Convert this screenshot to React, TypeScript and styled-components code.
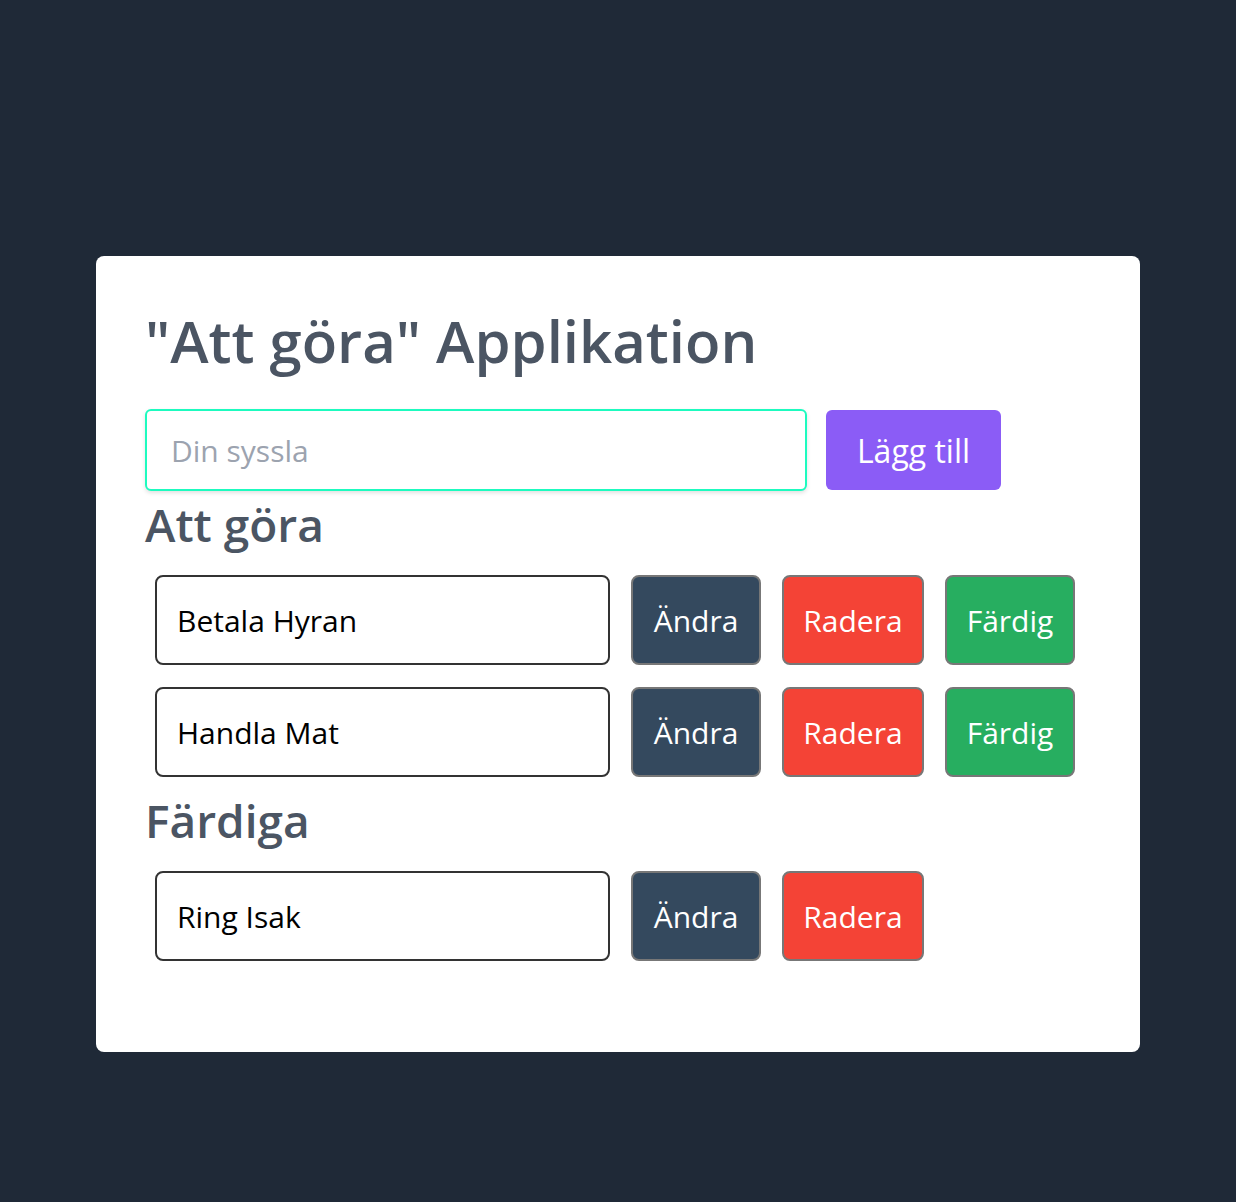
import React from 'react';
import styled, { createGlobalStyle } from 'styled-components';

const GlobalStyle = createGlobalStyle`
  html, body {
    margin: 0;
    padding: 0;
    background: #1f2937;
    font-family: "Open Sans", "Noto Sans", sans-serif;
  }
  * { box-sizing: border-box; }
`;

const Page = styled.div`
  min-height: 1202px;
  padding-top: 256px;
`;

const Card = styled.div`
  width: 1044px;
  height: 796px;
  margin: 0 auto;
  background: #fff;
  border-radius: 8px;
  padding: 45px 49px 0 49px;
`;

const Title = styled.h1`
  margin: 0 0 28px 0;
  font-size: 58px;
  line-height: 80px;
  font-weight: 600;
  color: #4b5563;
`;

const AddRow = styled.div`
  display: flex;
  align-items: center;
  gap: 19px;
`;

const TaskInput = styled.input`
  width: 662px;
  height: 82px;
  border: 2px solid #1dfbbf;
  border-radius: 6px;
  padding: 0 24px;
  font-family: inherit;
  font-size: 30px;
  color: #111;
  outline: none;
  box-shadow: 0 2px 4px rgba(0, 0, 0, 0.12);
  &::placeholder { color: #9ca3af; }
`;

const AddButton = styled.button`
  width: 175px;
  height: 80px;
  padding: 0;
  border: none;
  border-radius: 6px;
  background: #8b5cf6;
  color: #fff;
  font-family: inherit;
  font-size: 32px;
`;

const Heading = styled.h2`
  margin: 0 0 8px 0;
  font-size: 46px;
  line-height: 66px;
  font-weight: 600;
  color: #4b5563;
`;

const List = styled.div`
  display: flex;
  flex-direction: column;
  gap: 22px;
  padding: 10px 0 10px 10px;
`;

const Row = styled.div`
  display: flex;
  gap: 21px;
`;

const ItemBox = styled.div`
  flex-shrink: 0;
  width: 455px;
  height: 90px;
  border: 2px solid #333;
  border-radius: 8px;
  padding: 0 20px;
  display: flex;
  align-items: center;
  font-size: 30px;
  color: #000;
`;

const ActionButton = styled.button<{ $bg: string; $w: number }>`
  flex-shrink: 0;
  width: ${(p) => p.$w}px;
  height: 90px;
  padding: 0;
  border: 2px solid #777;
  border-radius: 8px;
  background: ${(p) => p.$bg};
  color: #fff;
  font-family: inherit;
  font-size: 30px;
`;

type Task = { text: string; done: boolean };

const todo: Task[] = [
  { text: 'Betala Hyran', done: false },
  { text: 'Handla Mat', done: false },
];
const done: Task[] = [{ text: 'Ring Isak', done: true }];

function TaskRow({ task }: { task: Task }) {
  return (
    <Row>
      <ItemBox>{task.text}</ItemBox>
      <ActionButton $bg="#34495e" $w={130}>Ändra</ActionButton>
      <ActionButton $bg="#f44336" $w={142}>Radera</ActionButton>
      {!task.done && <ActionButton $bg="#27ae60" $w={130}>Färdig</ActionButton>}
    </Row>
  );
}

export default function App() {
  return (
    <Page>
      <GlobalStyle />
      <Card>
        <Title>"Att göra" Applikation</Title>
        <AddRow>
          <TaskInput placeholder="Din syssla" />
          <AddButton>Lägg till</AddButton>
        </AddRow>
        <Heading>Att göra</Heading>
        <List>
          {todo.map((t) => <TaskRow key={t.text} task={t} />)}
        </List>
        <Heading>Färdiga</Heading>
        <List>
          {done.map((t) => <TaskRow key={t.text} task={t} />)}
        </List>
      </Card>
    </Page>
  );
}
